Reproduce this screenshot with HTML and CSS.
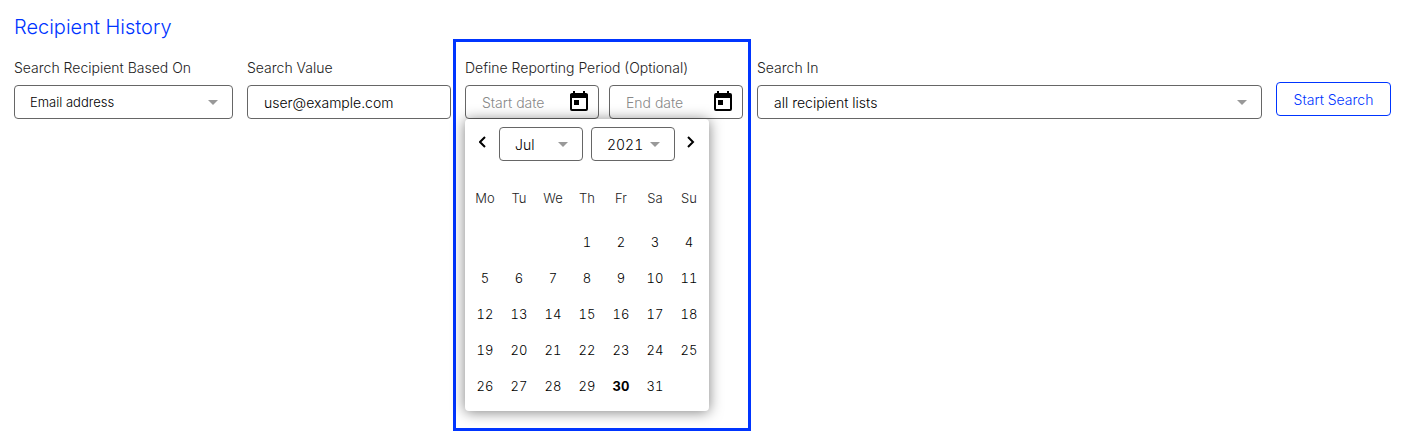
FILE: index.html
```html
<!DOCTYPE html>
<html lang="en">
<head>
    <meta charset="UTF-8">
    <meta name="viewport" content="width=device-width, initial-scale=1.0">
    <title>Recipient History</title>
    <link rel="stylesheet" href="styles.css">
</head>
<body>
    <main>
        <h1>Recipient History</h1>
        <form class="search-form">
            <!-- Search type -->
            <div class="field field-type">
                <label for="search-type">Search Recipient Based On</label>
                <div class="select">
                    <select id="search-type" class="small" name="search-type">
                        <option selected>Email address</option>
                        <option>Recipient ID</option>
                    </select>
                </div>
            </div>

            <!-- Search value -->
            <div class="field field-value">
                <label for="search-value">Search Value</label>
                <input type="text" id="search-value" name="search-value" value="user@example.com">
            </div>

            <!-- Reporting period -->
            <div class="field period">
                <label for="start-date">Define Reporting Period (Optional)</label>
                <div class="dates">
                    <div class="date">
                        <input type="text" id="start-date" name="start-date" placeholder="Start date">
                        <button type="button" class="icon-btn" aria-label="Choose start date">
                            <svg viewBox="0 0 18 20" width="18" height="20">
                                <path d="M3 0h2v2h8V0h2v2h1a2 2 0 0 1 2 2v14a2 2 0 0 1-2 2H2a2 2 0 0 1-2-2V4a2 2 0 0 1 2-2h1zM2 7v11h14V7zM4 9h5v5H4z" fill-rule="evenodd"/>
                            </svg>
                        </button>
                    </div>
                    <div class="date">
                        <input type="text" id="end-date" name="end-date" placeholder="End date" aria-label="End date">
                        <button type="button" class="icon-btn" aria-label="Choose end date">
                            <svg viewBox="0 0 18 20" width="18" height="20">
                                <path d="M3 0h2v2h8V0h2v2h1a2 2 0 0 1 2 2v14a2 2 0 0 1-2 2H2a2 2 0 0 1-2-2V4a2 2 0 0 1 2-2h1zM2 7v11h14V7zM4 9h5v5H4z" fill-rule="evenodd"/>
                            </svg>
                        </button>
                    </div>
                </div>

                <!-- Date picker -->
                <div class="calendar">
                    <div class="calendar-nav">
                        <button type="button" class="arrow" aria-label="Previous month">
                            <svg viewBox="0 0 8 12" width="8" height="12"><path d="M6 1L1 6l5 5"/></svg>
                        </button>
                        <div class="select">
                            <select name="month" aria-label="Month">
                                <option>Jun</option>
                                <option selected>Jul</option>
                                <option>Aug</option>
                            </select>
                        </div>
                        <div class="select">
                            <select name="year" aria-label="Year">
                                <option>2020</option>
                                <option selected>2021</option>
                            </select>
                        </div>
                        <button type="button" class="arrow" aria-label="Next month">
                            <svg viewBox="0 0 8 12" width="8" height="12"><path d="M1 1l5 5-5 5"/></svg>
                        </button>
                    </div>
                    <table>
                        <thead>
                            <tr><th>Mo</th><th>Tu</th><th>We</th><th>Th</th><th>Fr</th><th>Sa</th><th>Su</th></tr>
                        </thead>
                        <tbody>
                            <tr><td></td><td></td><td></td><td>1</td><td>2</td><td>3</td><td>4</td></tr>
                            <tr><td>5</td><td>6</td><td>7</td><td>8</td><td>9</td><td>10</td><td>11</td></tr>
                            <tr><td>12</td><td>13</td><td>14</td><td>15</td><td>16</td><td>17</td><td>18</td></tr>
                            <tr><td>19</td><td>20</td><td>21</td><td>22</td><td>23</td><td>24</td><td>25</td></tr>
                            <tr><td>26</td><td>27</td><td>28</td><td>29</td><td class="today">30</td><td>31</td><td></td></tr>
                        </tbody>
                    </table>
                </div>
            </div>

            <!-- Lists -->
            <div class="field field-lists">
                <label for="search-in">Search In</label>
                <div class="select">
                    <select id="search-in" name="search-in">
                        <option selected>all recipient lists</option>
                    </select>
                </div>
            </div>

            <button type="submit" class="submit-btn">Start Search</button>
        </form>
    </main>
</body>
</html>
```

FILE: styles.css
```css
*, *::before {
    box-sizing: border-box;
}

body {
    font-family: Inter, "Liberation Sans", sans-serif;
    font-size: 14px;
    font-weight: 300;
    margin: 0;
    background-color: #fff;
    color: #222;
}

main {
    min-height: 100vh;
    padding: 14px 16px 0 14px;
}

h1 {
    margin: 0 0 19px;
    font-size: 20px;
    font-weight: 300;
    line-height: 26px;
    color: #0035ff;
}

.search-form {
    display: flex;
    align-items: flex-start;
    gap: 14px;
}

.field label {
    display: block;
    line-height: 17px;
    margin-bottom: 9px;
    white-space: nowrap;
}

.field-type {
    flex: 0 0 219px;
}

.field-value {
    flex: 0 0 204px;
}

.field-lists {
    flex: 1;
}

input, select {
    display: block;
    width: 100%;
    height: 34px;
    padding: 0 16px;
    border: 1px solid #666;
    border-radius: 4px;
    background-color: #fff;
    color: #000;
    font: inherit;
}

select {
    appearance: none;
}

select.small {
    font-size: 13px;
    padding: 0 15px;
}

input::placeholder {
    color: #888;
    opacity: 1;
}

.select {
    position: relative;
}

.select::after {
    content: "";
    position: absolute;
    top: 15px;
    right: 15px;
    border: 5px solid transparent;
    border-top-color: #999;
    border-bottom: 0;
    pointer-events: none;
}

/* Reporting period */
.period {
    position: relative;
    flex: 0 0 278px;
}

.period::before {
    content: "";
    position: absolute;
    top: -20px;
    left: -12px;
    width: 298px;
    height: 392px;
    border: 3px solid #0035ff;
    pointer-events: none;
}

.dates {
    display: flex;
    gap: 10px;
}

.date {
    position: relative;
    flex: 1;
}

.date input {
    padding-right: 34px;
}

button {
    font: inherit;
    cursor: pointer;
}

.icon-btn, .arrow {
    display: flex;
    align-items: center;
    justify-content: center;
    padding: 0;
    border: 0;
    background: none;
}

.icon-btn {
    position: absolute;
    top: 6px;
    right: 11px;
}

/* Calendar */
.calendar {
    position: absolute;
    top: 100%;
    left: 0;
    width: 244px;
    padding: 8px 3px 7px;
    border-radius: 4px;
    background-color: #fff;
    box-shadow: 0 1px 14px rgba(0, 0, 0, 0.5);
    font-variant-numeric: tabular-nums;
}

.calendar-nav {
    display: flex;
    justify-content: center;
    gap: 8px;
    margin-bottom: 11px;
}

.calendar-nav .select {
    width: 84px;
}

.calendar-nav select {
    padding: 0 15px;
    font-variant-numeric: tabular-nums;
}

.arrow {
    width: 16px;
    height: 30px;
}

.arrow path {
    fill: none;
    stroke: #000;
    stroke-width: 2;
}

table {
    width: 100%;
    table-layout: fixed;
    border-collapse: collapse;
    font-size: 13px;
}

th, td {
    height: 36px;
    padding: 0;
    font-weight: 300;
    text-align: center;
}

td {
    color: #000;
}

th {
    height: 52px;
}

.today {
    font-weight: 700;
}

.submit-btn {
    min-width: 115px;
    height: 34px;
    margin-top: 23px;
    padding: 0 16px;
    border: 1px solid #0035ff;
    border-radius: 4px;
    background-color: #fff;
    color: #0035ff;
    white-space: nowrap;
}
```
